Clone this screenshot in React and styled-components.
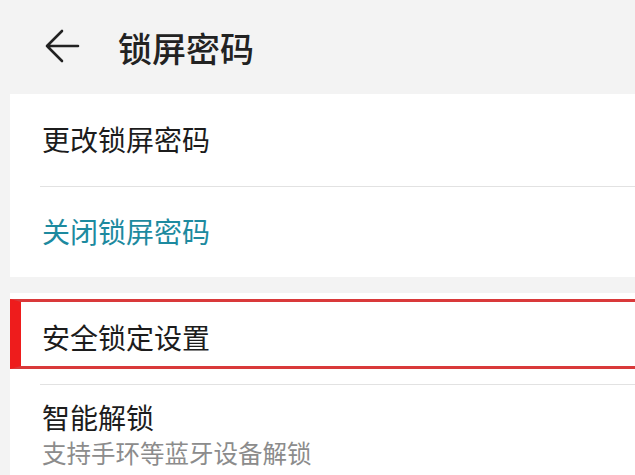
import React from "react";
import styled, { createGlobalStyle } from "styled-components";

const Global = createGlobalStyle`
  html, body {
    margin: 0;
    padding: 0;
    background: #f3f3f3;
    font-family: "Noto Sans CJK SC", "Noto Sans", sans-serif;
    overflow: hidden;
  }
`;

const Page = styled.div`
  width: 635px;
  height: 475px;
  overflow: hidden;
  background: #f3f3f3;
`;

const Header = styled.div`
  height: 94px;
  display: flex;
  align-items: center;
  padding-left: 44px;
  gap: 38px;
  box-sizing: border-box;
`;

const Title = styled.h1`
  margin: 0;
  font-size: 34px;
  font-weight: 500;
  color: #222;
  line-height: 1;
  padding-top: 2px;
`;

const Card = styled.div`
  margin-left: 10px;
  background: #fff;
  margin-bottom: ${(p) => p.gap || 0}px;
`;

const Row = styled.div`
  height: ${(p) => p.h}px;
  display: flex;
  flex-direction: column;
  justify-content: center;
  padding-left: 32px;
  box-sizing: border-box;
`;

const Label = styled.div`
  font-size: 28px;
  line-height: 1.2;
  color: ${(p) => (p.accent ? "#1d8a9f" : "#1c1c1c")};
`;

const Sub = styled.div`
  font-size: 24.5px;
  line-height: 1.3;
  color: #8c8c8c;
  margin-top: 2px;
`;

const Divider = styled.div`
  height: 1px;
  background: #e2e2e2;
  margin-left: 30px;
`;

const HighlightRow = styled.div`
  height: 91px;
  padding-top: 6px;
  box-sizing: border-box;
`;

const Highlight = styled.div`
  height: 70px;
  box-sizing: border-box;
  border-top: 3px solid #d9393a;
  border-bottom: 3px solid #d9393a;
  border-left: 11px solid #ee1c1c;
  display: flex;
  align-items: center;
  padding-left: 21px;
  padding-top: 8px;
`;

const BackArrow = () => (
  <svg width="36" height="36" viewBox="0 0 36 36" fill="none">
    <path
      d="M34 17H3M18 2L3 17l15 15"
      stroke="#222"
      strokeWidth="2.6"
      strokeLinecap="round"
      strokeLinejoin="round"
    />
  </svg>
);

export default function App() {
  return (
    <Page>
      <Global />
      <Header>
        <BackArrow />
        <Title>锁屏密码</Title>
      </Header>
      <Card gap={16}>
        <Row h={92}>
          <Label>更改锁屏密码</Label>
        </Row>
        <Divider />
        <Row h={90}>
          <Label accent>关闭锁屏密码</Label>
        </Row>
      </Card>
      <Card>
        <HighlightRow>
          <Highlight>
            <Label>安全锁定设置</Label>
          </Highlight>
        </HighlightRow>
        <Divider />
        <Row h={100}>
          <Label>智能解锁</Label>
          <Sub>支持手环等蓝牙设备解锁</Sub>
        </Row>
      </Card>
    </Page>
  );
}
